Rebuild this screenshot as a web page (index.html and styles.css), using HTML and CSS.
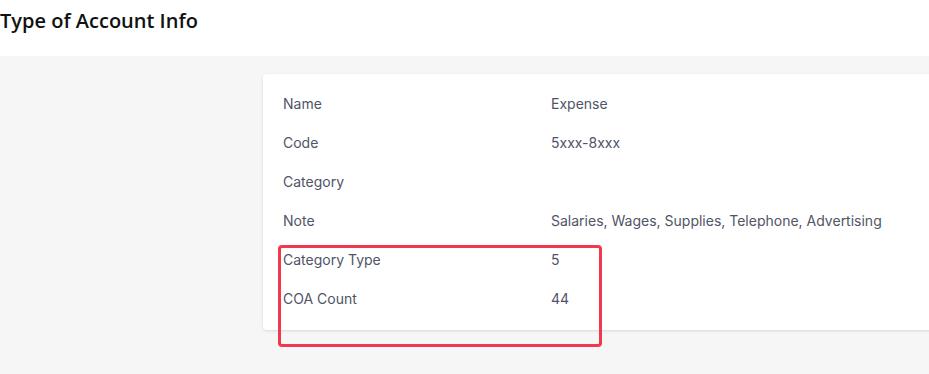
FILE: index.html
```html
<!DOCTYPE html>
<html lang="en">
<head>
    <meta charset="UTF-8">
    <meta name="viewport" content="width=device-width, initial-scale=1.0">
    <title>Type of Account Info</title>
    <link rel="stylesheet" href="styles.css">
</head>
<body>
    <h1 class="page-title">Type of Account Info</h1>
    <div class="content">
        <div class="info-card">
            <table class="info-table">
                <tr><td class="label">Name</td><td>Expense</td></tr>
                <tr><td class="label">Code</td><td>5xxx-8xxx</td></tr>
                <tr><td class="label">Category</td><td></td></tr>
                <tr><td class="label">Note</td><td>Salaries, Wages, Supplies, Telephone, Advertising</td></tr>
                <tr><td class="label">Category Type</td><td>5</td></tr>
                <tr><td class="label">COA Count</td><td>44</td></tr>
            </table>
            <div class="highlight"></div>
        </div>
    </div>
</body>
</html>
```

FILE: styles.css
```css
html {
    overflow: hidden;
}
body {
    margin: 0;
    font-family: "Open Sans", sans-serif;
    background: #fff;
}
.page-title {
    margin: 0;
    height: 56px;
    padding: 7px 0 0 0;
    box-sizing: border-box;
    font-size: 20px;
    font-weight: 600;
    color: #111;
    line-height: 27px;
}
.content {
    background: #f6f6f6;
    min-height: 318px;
    padding: 18px 0 0 263px;
    box-sizing: border-box;
    overflow: hidden;
}
.info-card {
    position: relative;
    margin-right: -20px;
    background: #fff;
    border-radius: 4px;
    box-shadow: 0 1px 3px rgba(0, 0, 0, 0.12);
    padding: 10px 20px 12px;
}
.info-table {
    border-collapse: collapse;
    font-family: "Inter", sans-serif;
    font-size: 14px;
    color: #505466;
}
.info-table td {
    height: 39px;
    padding: 0;
    vertical-align: middle;
}
.info-table td.label {
    width: 268px;
}
.highlight {
    position: absolute;
    left: 15px;
    top: 171px;
    width: 318px;
    height: 96px;
    border: 3px solid #f0394f;
    border-radius: 4px;
}
```
